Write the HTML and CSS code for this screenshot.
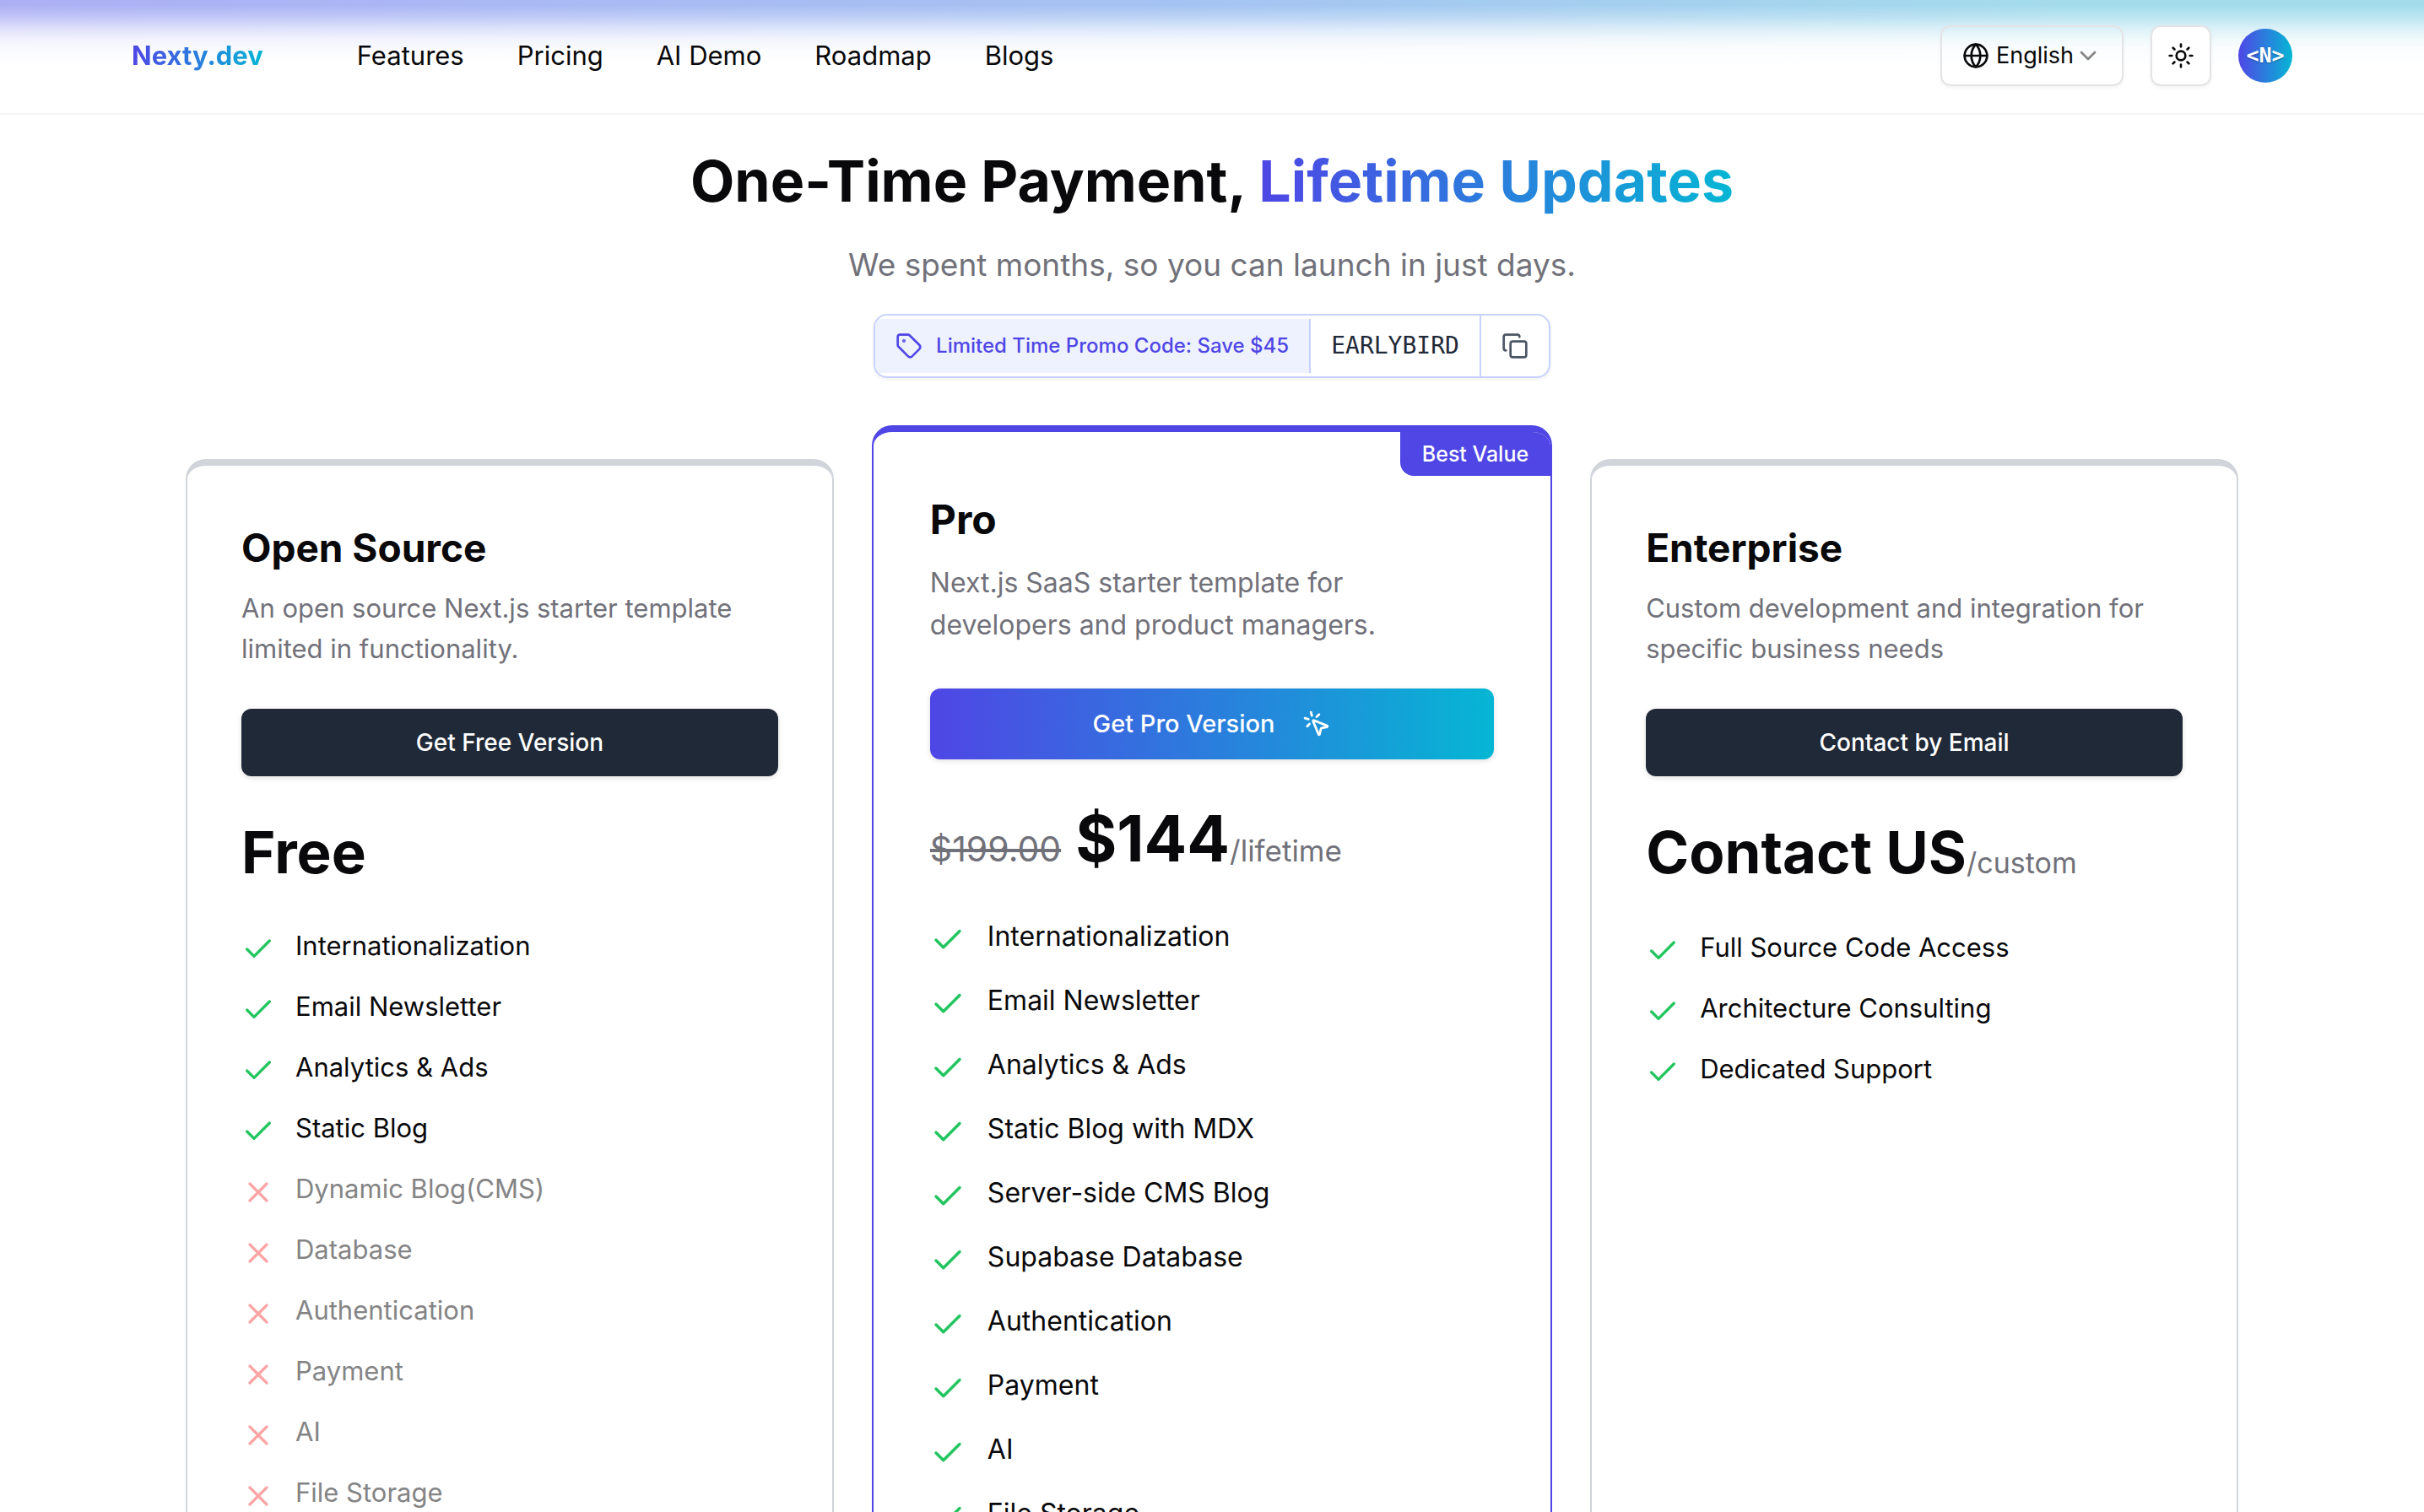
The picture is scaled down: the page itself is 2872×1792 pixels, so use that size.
FILE: index.html
```html
<!DOCTYPE html>
<html lang="en">
<head>
<meta charset="utf-8">
<meta name="viewport" content="width=device-width, initial-scale=1">
<title>Pricing - Nexty.dev</title>
<link rel="stylesheet" href="styles.css">
</head>
<body>
<svg class="sprite" aria-hidden="true">
  <symbol id="check" viewBox="0 0 24 24"><path d="M20 6 9 17l-5-5"/></symbol>
  <symbol id="cross" viewBox="0 0 24 24"><path d="M18 6 6 18M6 6l12 12"/></symbol>
</svg>

<header class="site-header">
  <div class="container header-row">
    <a class="brand gradient-text" href="#">Nexty.dev</a>
    <nav class="main-nav" aria-label="Main">
      <a href="#">Features</a>
      <a href="#">Pricing</a>
      <a href="#">AI Demo</a>
      <a href="#">Roadmap</a>
      <a href="#">Blogs</a>
    </nav>
    <div class="header-tools">
      <label class="language">
        <svg class="icon globe" viewBox="0 0 24 24"><circle cx="12" cy="12" r="10"/><path d="M12 2a14.5 14.5 0 0 0 0 20 14.5 14.5 0 0 0 0-20M2 12h20"/></svg>
        <select aria-label="Language"><option>English</option></select>
        <svg class="icon chevron" viewBox="0 0 24 24"><path d="m6 9 6 6 6-6"/></svg>
      </label>
      <button class="theme-toggle" type="button" aria-label="Toggle theme">
        <svg class="icon" viewBox="0 0 24 24"><circle cx="12" cy="12" r="4"/><path d="M12 2v2M12 20v2M4.93 4.93l1.41 1.41M17.66 17.66l1.41 1.41M2 12h2M20 12h2M6.34 17.66l-1.41 1.41M19.07 4.93l-1.41 1.41"/></svg>
      </button>
      <button class="avatar" type="button">&lt;N&gt;</button>
    </div>
  </div>
</header>

<main class="container pricing">
  <h1>One-Time Payment, <span class="gradient-text">Lifetime Updates</span></h1>
  <p class="lead">We spent months, so you can launch in just days.</p>

  <div class="promo">
    <div class="promo-label">
      <svg class="icon" viewBox="0 0 24 24"><path d="M12.586 2.586A2 2 0 0 0 11.172 2H4a2 2 0 0 0-2 2v7.172a2 2 0 0 0 .586 1.414l8.704 8.704a2.426 2.426 0 0 0 3.42 0l6.58-6.58a2.426 2.426 0 0 0 0-3.42z"/><circle cx="7.5" cy="7.5" r=".5" fill="currentColor"/></svg>
      <span>Limited Time Promo Code: Save $45</span>
    </div>
    <code class="promo-code">EARLYBIRD</code>
    <button class="promo-copy" type="button" aria-label="Copy code">
      <svg class="icon" viewBox="0 0 24 24"><rect x="8" y="8" width="14" height="14" rx="2"/><path d="M4 16c-1.1 0-2-.9-2-2V4c0-1.1.9-2 2-2h10c1.1 0 2 .9 2 2"/></svg>
    </button>
  </div>

  <div class="plans">
    <section class="plan">
      <h2>Open Source</h2>
      <p class="summary">An open source Next.js starter template limited in functionality.</p>
      <button class="cta" type="button">Get Free Version</button>
      <p class="price"><strong>Free</strong></p>
      <ul class="features">
        <li><svg class="icon"><use href="#check"/></svg>Internationalization</li>
        <li><svg class="icon"><use href="#check"/></svg>Email Newsletter</li>
        <li><svg class="icon"><use href="#check"/></svg>Analytics &amp; Ads</li>
        <li><svg class="icon"><use href="#check"/></svg>Static Blog</li>
        <li class="missing"><svg class="icon"><use href="#cross"/></svg>Dynamic Blog(CMS)</li>
        <li class="missing"><svg class="icon"><use href="#cross"/></svg>Database</li>
        <li class="missing"><svg class="icon"><use href="#cross"/></svg>Authentication</li>
        <li class="missing"><svg class="icon"><use href="#cross"/></svg>Payment</li>
        <li class="missing"><svg class="icon"><use href="#cross"/></svg>AI</li>
        <li class="missing"><svg class="icon"><use href="#cross"/></svg>File Storage</li>
      </ul>
    </section>

    <section class="plan plan-pro">
      <span class="badge">Best Value</span>
      <h2>Pro</h2>
      <p class="summary">Next.js SaaS starter template for developers and product managers.</p>
      <button class="cta" type="button">Get Pro Version
        <svg class="icon" viewBox="0 0 24 24"><path d="M14 4.1 12 6M5.1 8l-2.9-.8M6 12l-1.9 2M7.2 2.2 8 5.1M9.037 9.69a.498.498 0 0 1 .653-.653l11 4.5a.5.5 0 0 1-.074.949l-4.349 1.041a1 1 0 0 0-.74.739l-1.04 4.35a.5.5 0 0 1-.95.074z"/></svg>
      </button>
      <p class="price"><s>$199.00</s><strong>$144</strong><span class="suffix">/lifetime</span></p>
      <ul class="features">
        <li><svg class="icon"><use href="#check"/></svg>Internationalization</li>
        <li><svg class="icon"><use href="#check"/></svg>Email Newsletter</li>
        <li><svg class="icon"><use href="#check"/></svg>Analytics &amp; Ads</li>
        <li><svg class="icon"><use href="#check"/></svg>Static Blog with MDX</li>
        <li><svg class="icon"><use href="#check"/></svg>Server-side CMS Blog</li>
        <li><svg class="icon"><use href="#check"/></svg>Supabase Database</li>
        <li><svg class="icon"><use href="#check"/></svg>Authentication</li>
        <li><svg class="icon"><use href="#check"/></svg>Payment</li>
        <li><svg class="icon"><use href="#check"/></svg>AI</li>
        <li><svg class="icon"><use href="#check"/></svg>File Storage</li>
      </ul>
    </section>

    <section class="plan">
      <h2>Enterprise</h2>
      <p class="summary">Custom development and integration for specific business needs</p>
      <button class="cta" type="button">Contact by Email</button>
      <p class="price"><strong>Contact US</strong><span class="suffix">/custom</span></p>
      <ul class="features">
        <li><svg class="icon"><use href="#check"/></svg>Full Source Code Access</li>
        <li><svg class="icon"><use href="#check"/></svg>Architecture Consulting</li>
        <li><svg class="icon"><use href="#check"/></svg>Dedicated Support</li>
      </ul>
    </section>
  </div>
</main>
</body>
</html>
```
FILE: styles.css
```css
:root {
  --ink: #09090b;
  --muted: #71717a;
  --line: #e4e4e7;
  --indigo: #4f46e5;
  --indigo-soft: #c7d2fe;
  --brand-gradient: linear-gradient(to right, #4f46e5, #06b6d4);
}

*, *::before, *::after { box-sizing: border-box; }

body {
  margin: 0;
  background: #fff;
  color: var(--ink);
  font-family: Inter, "Liberation Sans", sans-serif;
  font-size: 31px;
  line-height: 48px;
}

/* Soft colour glow along the top edge */
body::before {
  content: "";
  position: absolute;
  inset: 0 0 auto;
  height: 80px;
  z-index: -1;
  background: linear-gradient(to right, #adb0f5, #a5c4f2 50%, #a4dcec 85%);
  -webkit-mask-image: linear-gradient(#000 8%, rgba(0,0,0,.75) 25%, rgba(0,0,0,.4) 42%, rgba(0,0,0,.16) 58%, rgba(0,0,0,.04) 75%, transparent);
  mask-image: linear-gradient(#000 8%, rgba(0,0,0,.75) 25%, rgba(0,0,0,.4) 42%, rgba(0,0,0,.16) 58%, rgba(0,0,0,.04) 75%, transparent);
}

h1, h2, p, ul { margin: 0; }
a { color: inherit; text-decoration: none; }
button, select { font: inherit; color: inherit; cursor: pointer; }

.sprite { display: none; }

.icon {
  flex: none;
  width: 32px;
  height: 32px;
  fill: none;
  stroke: currentColor;
  stroke-width: 2;
  stroke-linecap: round;
  stroke-linejoin: round;
}

.container {
  max-width: 2560px;
  margin: 0 auto;
}

.gradient-text {
  background: var(--brand-gradient);
  -webkit-background-clip: text;
  background-clip: text;
  color: transparent;
}

/* Header */
.site-header {
  padding: 30px 0 32px;
  border-bottom: 2px solid #f4f4f5;
}

.header-row {
  display: flex;
  align-items: center;
}

.brand { font-weight: 700; }

.main-nav {
  display: flex;
  gap: 63px;
  margin-left: 111px;
}

.header-tools {
  display: flex;
  align-items: center;
  gap: 32px;
  margin-left: auto;
}

.language, .theme-toggle {
  display: flex;
  align-items: center;
  height: 72px;
  border: 2px solid var(--line);
  border-radius: 12px;
  box-shadow: 0 2px 4px rgba(0, 0, 0, .05);
}

.language { padding: 0 24px; }
.globe { margin-right: 8px; }
.chevron { color: #848485; }

.language select {
  appearance: none;
  padding: 0;
  border: 0;
  background: transparent;
  font-size: 27px;
}

.theme-toggle {
  justify-content: center;
  width: 72px;
  padding: 0;
  background: #fff;
}

.avatar {
  width: 64px;
  height: 64px;
  padding: 0;
  border: 0;
  border-radius: 50%;
  background: var(--brand-gradient);
  color: #fff;
  font: 700 25px/64px "DejaVu Sans Mono", monospace;
  text-shadow: 0 1px 2px rgba(0, 0, 0, .3);
}

/* Intro */
.pricing {
  display: flex;
  flex-direction: column;
  align-items: center;
  padding: 38px 64px 64px;
}

h1 {
  font-size: 68px;
  line-height: 80px;
  text-align: center;
}

.lead {
  margin-top: 32px;
  color: var(--muted);
  font-size: 37px;
  line-height: 56px;
}

.promo {
  display: flex;
  align-items: center;
  height: 76px;
  margin-top: 30px;
  border: 2px solid var(--indigo-soft);
  border-radius: 16px;
  box-shadow: 0 2px 4px rgba(0, 0, 0, .06);
  overflow: hidden;
}

.promo-label {
  display: flex;
  align-items: center;
  gap: 16px;
  height: 64px;
  padding: 0 24px;
  border-right: 2px solid var(--indigo-soft);
  background: #eef2ff;
  color: var(--indigo);
  font-size: 24px;
  font-weight: 500;
}

.promo-code {
  padding: 0 24px;
  color: #1f2937;
  font-family: "DejaVu Sans Mono", monospace;
  font-size: 28px;
}

.promo-copy {
  display: flex;
  align-items: center;
  height: 100%;
  padding: 0 24px;
  border: 0;
  border-left: 2px solid var(--indigo-soft);
  background: none;
  color: #4b5563;
}

/* Plans */
.plans {
  display: grid;
  grid-template-columns: 20fr 21fr 20fr;
  gap: 45px;
  width: 100%;
  margin-top: 56px;
}

.plan {
  margin: 40px 0;
  padding: 69px 64px 64px;
  border: 2px solid #d1d5db;
  border-top-width: 8px;
  border-radius: 24px;
}

.plan h2 {
  font-size: 46px;
  line-height: 56px;
}

.summary {
  margin-top: 20px;
  padding-right: 16px;
  color: var(--muted);
}

.cta {
  display: flex;
  align-items: center;
  justify-content: center;
  gap: 33px;
  width: 100%;
  height: 80px;
  margin-top: 47px;
  border: 0;
  border-radius: 12px;
  background: #1f2937;
  box-shadow: 0 2px 6px rgba(0, 0, 0, .12);
  color: #fff;
  font-size: 28px;
  font-weight: 500;
}

.price {
  display: flex;
  align-items: baseline;
  margin-top: 50px;
}

.price strong {
  font-size: 69px;
  line-height: 80px;
}

.suffix {
  color: var(--muted);
  font-size: 34px;
  line-height: 58px;
}

.features {
  display: flex;
  flex-direction: column;
  gap: 24px;
  margin-top: 47px;
  padding: 0;
  list-style: none;
}

.features li {
  display: flex;
  align-items: flex-end;
  gap: 24px;
}

.features .icon {
  width: 40px;
  height: 40px;
  color: #22c55e;
}

.features .missing { color: #848485; }
.features .missing .icon { color: #fca5a5; }

/* Highlighted plan, one step larger than its neighbours */
.plan-pro {
  position: relative;
  margin: 0;
  padding: 76px 67px 67px;
  border-color: var(--indigo);
  font-size: 32px;
  line-height: 50px;
  overflow: hidden;
}

.badge {
  position: absolute;
  top: 0;
  right: 0;
  padding: 0 26px;
  border-bottom-left-radius: 16px;
  background: var(--indigo);
  color: #fff;
  font-size: 25px;
  font-weight: 500;
  line-height: 52px;
}

.plan-pro h2 { font-size: 48px; }

.plan-pro .summary { margin-top: 22px; }

.plan-pro .cta {
  height: 84px;
  margin-top: 50px;
  background: var(--brand-gradient);
  font-size: 29px;
}

.plan-pro .cta .icon {
  width: 34px;
  height: 34px;
}

.plan-pro .price { margin-top: 52px; }

.plan-pro .price s {
  margin-right: 17px;
  color: var(--muted);
  font-size: 41px;
}

.plan-pro .price strong {
  font-size: 75px;
  line-height: 84px;
}

.plan-pro .suffix { font-size: 35px; }

.plan-pro .features {
  gap: 26px;
  margin-top: 48px;
}

.plan-pro .features li { gap: 26px; }

.plan-pro .features .icon {
  width: 42px;
  height: 42px;
}
```
